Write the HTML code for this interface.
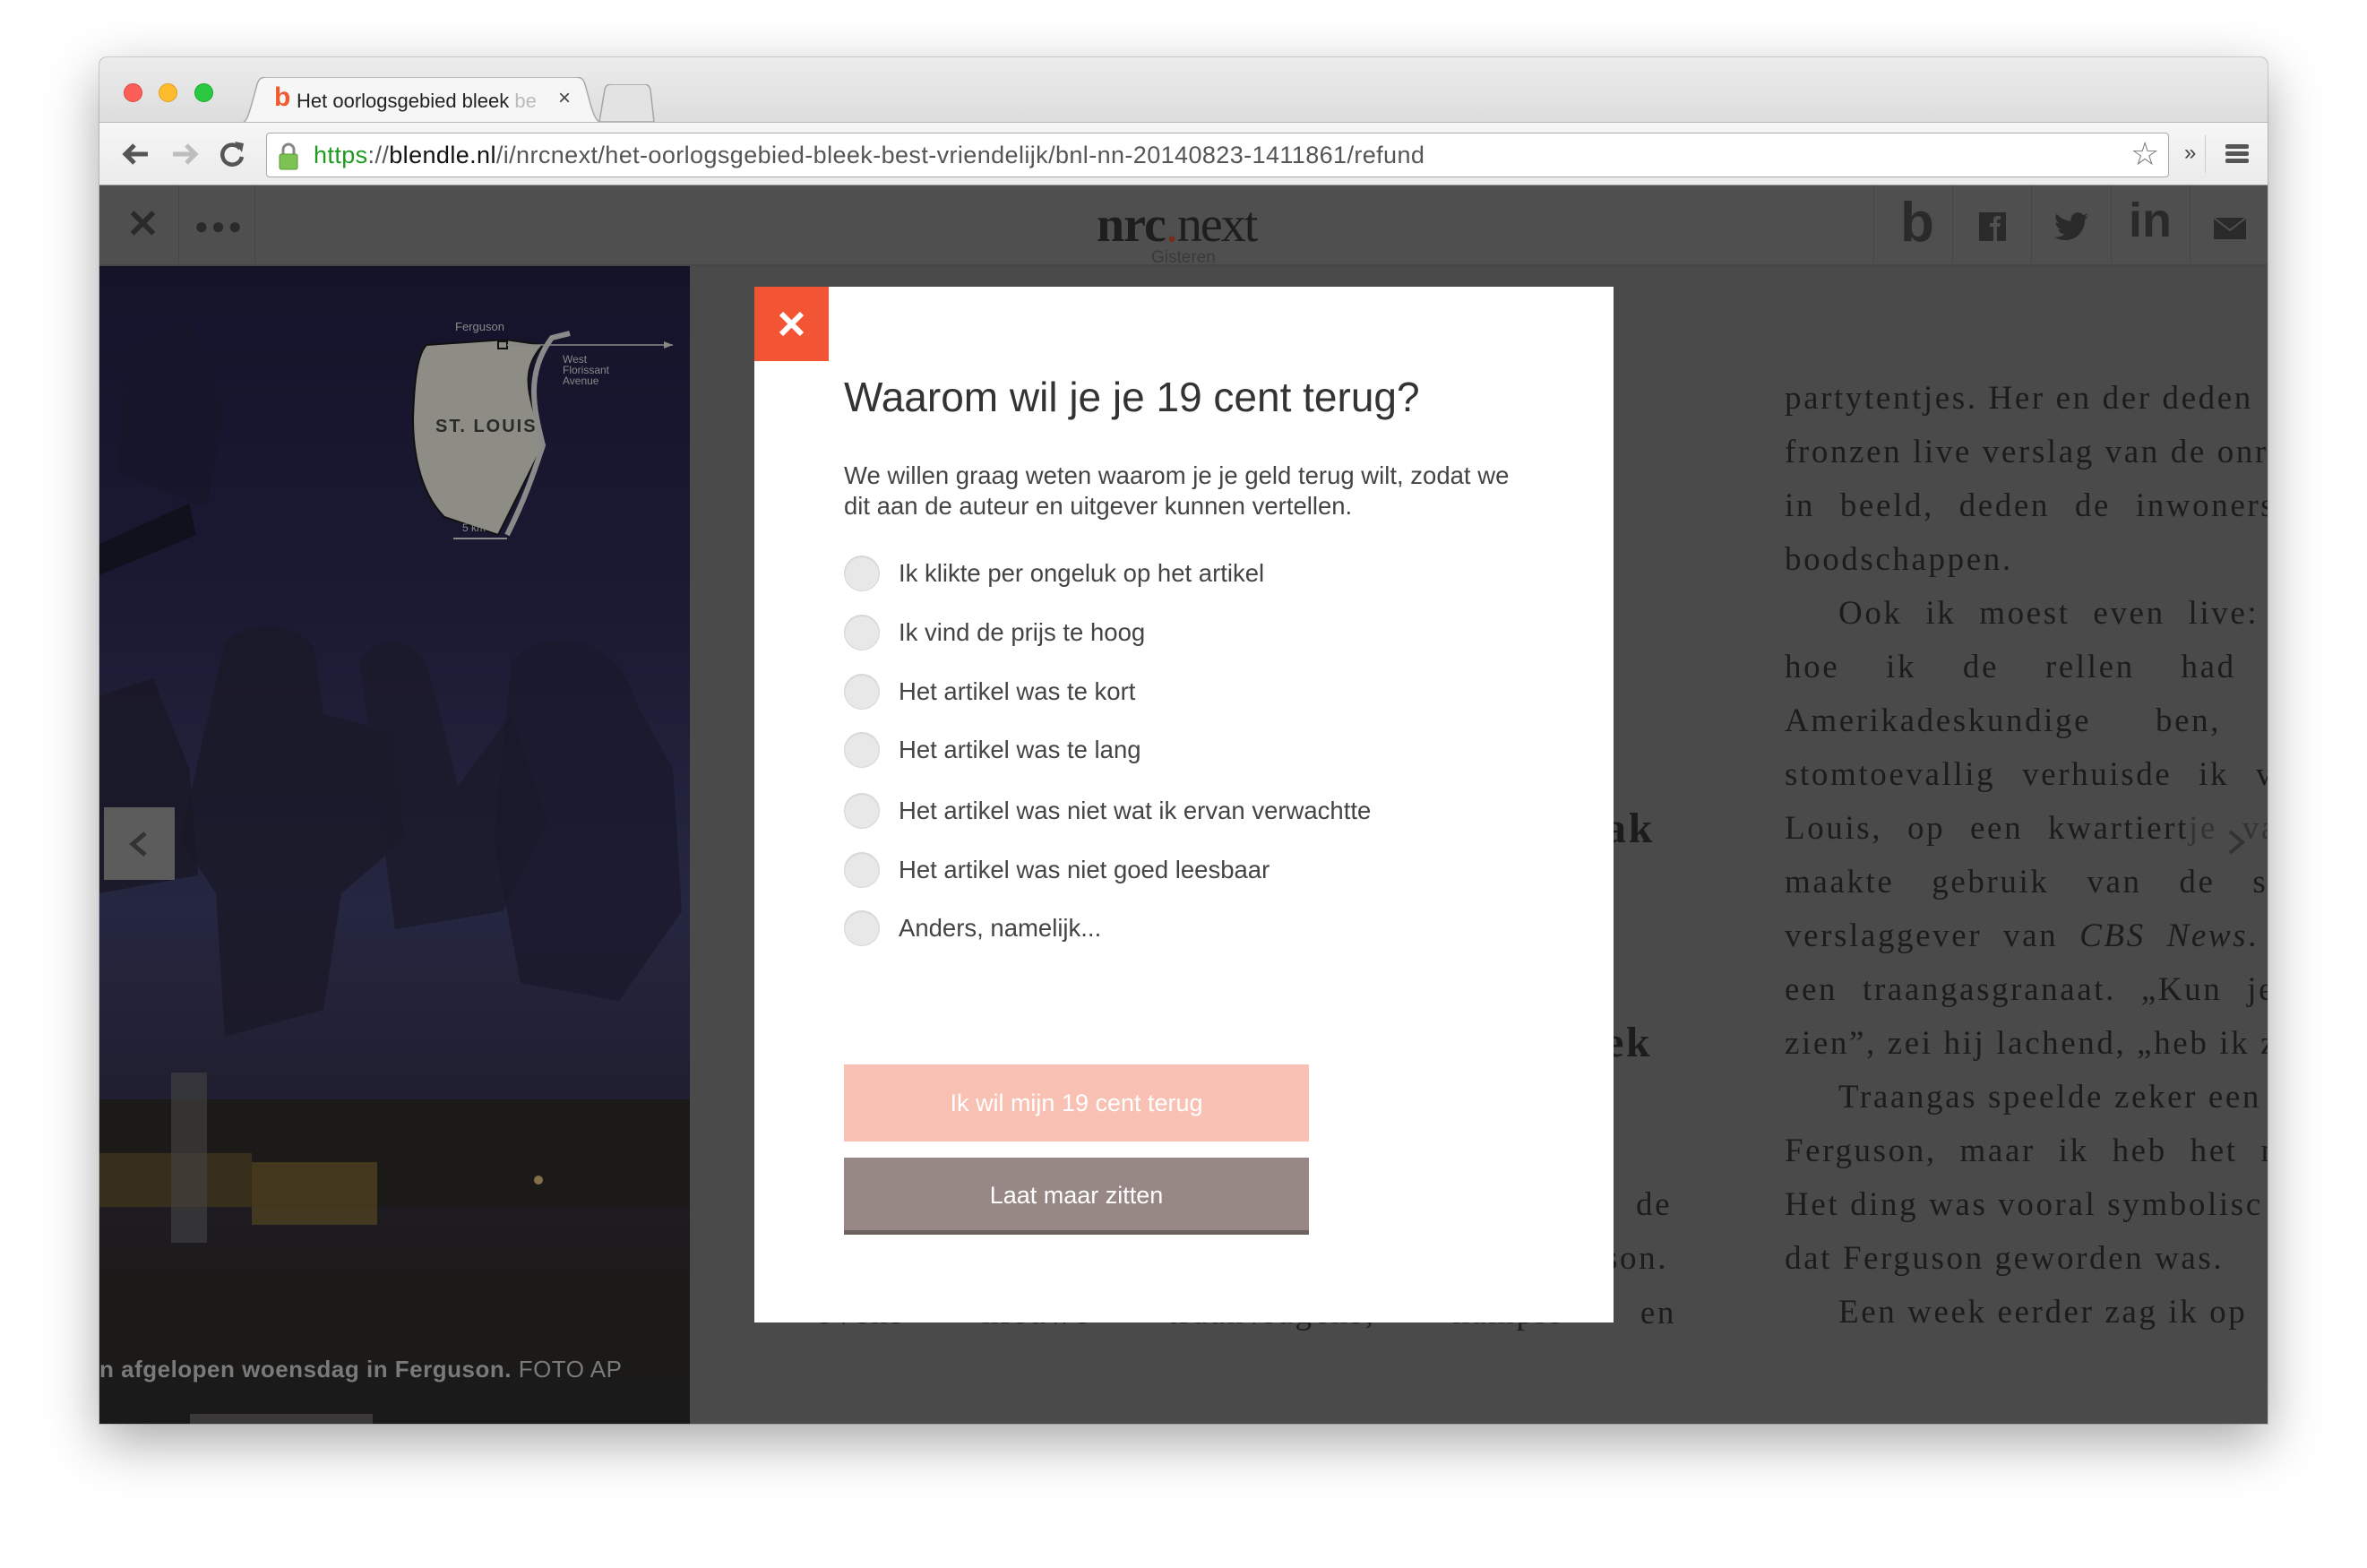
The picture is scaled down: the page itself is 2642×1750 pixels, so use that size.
<!DOCTYPE html>
<html><head><meta charset="utf-8"><style>
*{margin:0;padding:0;box-sizing:border-box}
body{width:2642px;height:1750px;background:#fff;position:relative;overflow:hidden;font-family:"Liberation Sans",Arial,sans-serif}
.abs{position:absolute}
#win{left:111px;top:64px;width:2420px;height:1525px;border-radius:8px 8px 0 0;box-shadow:0 20px 60px rgba(0,0,0,.35),0 0 0 1px rgba(0,0,0,.15);overflow:hidden;background:#4a4a4a}
#tabbar{left:0;top:0;width:2420px;height:72px;background:linear-gradient(#ececec,#dddddd)}
.tl{width:21px;height:21px;border-radius:50%;top:29px}
#toolbar{left:0;top:72px;width:2420px;height:71px;background:linear-gradient(#f6f6f6,#ebebeb);border-top:1px solid #b8b8b8;border-bottom:1px solid #9a9a9a}
#omni{left:186px;top:11px;width:2124px;height:50px;background:#fff;border:1px solid #a9a9a9;border-radius:4px}
#hdr{left:0;top:143px;width:2420px;height:90px;background:#4f4f4f;border-bottom:2px solid #464646}
.sep{top:0;width:1px;height:88px;background:#464646}
.art{font-family:"Liberation Serif",serif;font-size:37px;color:#1c1c1c;letter-spacing:2.6px;white-space:nowrap;line-height:60px}
.opt{left:59px;height:40px;font-size:27.5px;color:#444;line-height:40px}
.opt i{position:absolute;left:0;top:0;width:40px;height:40px;border-radius:50%;background:#e8e8e8;border:1px solid #d6d6d6;box-shadow:inset 0 1px 1px rgba(0,0,0,.08)}
.opt span{position:absolute;left:61px;top:0;white-space:nowrap}
.ind{padding-left:60px}
</style></head><body>
<div id="win" class="abs">
  <div id="tabbar" class="abs">
    <div class="abs tl" style="left:27px;background:#fc5f57;border:1px solid #df4744"></div>
    <div class="abs tl" style="left:66px;background:#fdbc2e;border:1px solid #dea123"></div>
    <div class="abs tl" style="left:106px;background:#29c840;border:1px solid #1aab29"></div>
    <svg class="abs" style="left:150px;top:22px" width="420" height="52"><path d="M0 52 C14 52 14 50 20 30 L26 8 C28 2 30 0 38 0 L380 0 C388 0 390 2 392 8 L398 30 C404 50 406 52 420 52 Z" fill="#f6f6f6" stroke="#a9a9a9" stroke-width="1.5"/></svg>
    <div class="abs" style="left:195px;top:28px;font-size:30px;font-weight:bold;color:#f05a2e">b</div>
    <div class="abs" style="left:220px;top:36px;font-size:22px;color:#222;white-space:nowrap;width:272px;overflow:hidden">Het oorlogsgebied bleek <span style="color:#bbb">be</span></div>
    <div class="abs" style="left:512px;top:32px;font-size:24px;color:#444">×</div>
    <svg class="abs" style="left:556px;top:30px" width="64" height="42"><path d="M2 42 L8 6 C9 2 11 0 16 0 L52 0 C56 0 58 2 59 6 L63 42 Z" fill="#e3e3e3" stroke="#a5a5a5" stroke-width="1.5"/></svg>
  </div>
  <div id="toolbar" class="abs">
    <svg class="abs" style="left:24px;top:21px" width="34" height="28"><path d="M30 14 H6 M15 4 L5 14 L15 24" stroke="#555" stroke-width="5" fill="none"/></svg>
    <svg class="abs" style="left:78px;top:21px" width="34" height="28"><path d="M4 14 H28 M19 4 L29 14 L19 24" stroke="#bdbdbd" stroke-width="5" fill="none"/></svg>
    <svg class="abs" style="left:132px;top:19px" width="32" height="32"><path d="M25 10 A11 11 0 1 0 27 19" stroke="#555" stroke-width="4.5" fill="none"/><path d="M19 2 L29 4 L27 14 Z" fill="#555"/></svg>
    <div id="omni" class="abs">
      <svg class="abs" style="left:12px;top:9px" width="24" height="32"><path d="M6 14 V9 A6 6 0 0 1 18 9 V14" stroke="#888" stroke-width="3" fill="none"/><rect x="2" y="14" width="20" height="17" rx="2" fill="#7cc354" stroke="#5a9a38"/></svg>
      <div class="abs" style="left:52px;top:9px;font-size:27px;color:#555;white-space:nowrap;letter-spacing:.4px"><span style="color:#1f9a1f">https</span>://<span style="color:#111">blendle.nl</span>/i/nrcnext/het-oorlogsgebied-bleek-best-vriendelijk/bnl-nn-20140823-1411861/refund</div>
      <div class="abs" style="left:2080px;top:2px;font-size:36px;color:#777">☆</div>
    </div>
    <div class="abs" style="left:2327px;top:20px;font-size:24px;color:#444">»</div>
    <div class="abs" style="left:2350px;top:14px;width:1px;height:42px;background:#ccc"></div>
    <div class="abs" style="left:2373px;top:24px;width:26px;height:5px;background:#555;border-radius:2px"></div>
    <div class="abs" style="left:2373px;top:32px;width:26px;height:5px;background:#555;border-radius:2px"></div>
    <div class="abs" style="left:2373px;top:40px;width:26px;height:5px;background:#555;border-radius:2px"></div>
  </div>
  <div id="hdr" class="abs">
    <div class="abs" style="left:30px;top:18px;font-size:44px;font-weight:bold;color:#2a2a2a">✕</div>
    <div class="abs sep" style="left:88px"></div>
    <div class="abs" style="left:106px;top:30px;font-size:26px;color:#2a2a2a;letter-spacing:3px">●●●</div>
    <div class="abs sep" style="left:173px"></div>
    <div class="abs" style="left:1113px;top:12px;font-family:'Liberation Serif',serif;font-size:56px;color:#1e1e1e;letter-spacing:-1px"><b>nrc</b><span style="color:#7a2a1a">.</span><span style="font-weight:normal;letter-spacing:-2px">next</span></div>
    <div class="abs" style="left:1174px;top:70px;font-size:19px;color:#3a3a3a">Gisteren</div>
    <div class="abs sep" style="left:1980px"></div>
    <div class="abs" style="left:2010px;top:6px;font-size:62px;font-weight:bold;color:#2a2a2a">b</div>
    <div class="abs sep" style="left:2068px"></div>
    <svg class="abs" style="left:2098px;top:30px" width="30" height="32"><rect width="30" height="32" fill="#2a2a2a"/><path d="M16 32 V16 H12 V12 H16 V8 C16 5 18 4 21 4 H24 V8 H21 C20 8 20 9 20 10 V12 H24 L23 16 H20 V32 Z" fill="#4f4f4f"/></svg>
    <div class="abs sep" style="left:2156px"></div>
    <svg class="abs" style="left:2182px;top:30px" width="38" height="32" viewBox="0 0 24 20"><path d="M24 2.4c-.9.4-1.8.7-2.8.8 1-.6 1.800-1.600 2.2-2.7-1 .6-2 1-3.1 1.2C19.3.7 18 0 16.6 0c-2.7 0-4.9 2.2-4.9 4.9 0 .4 0 .8.1 1.1C7.7 5.8 4.1 3.9 1.7.9c-.4.7-.7 1.6-.7 2.5 0 1.7.9 3.2 2.2 4.1-.8 0-1.6-.2-2.2-.6v.1c0 2.4 1.7 4.4 3.9 4.8-.4.1-.8.2-1.3.2-.3 0-.6 0-.9-.1.6 2 2.4 3.4 4.6 3.4-1.7 1.3-3.8 2.1-6.1 2.1-.4 0-.8 0-1.2-.1 2.2 1.4 4.8 2.2 7.5 2.2 9.1 0 14-7.5 14-14v-.6c1-.7 1.8-1.6 2.5-2.5z" fill="#2a2a2a"/></svg>
    <div class="abs sep" style="left:2245px"></div>
    <div class="abs" style="left:2265px;top:8px;font-size:54px;font-weight:bold;color:#2a2a2a">in</div>
    <div class="abs sep" style="left:2333px"></div>
    <svg class="abs" style="left:2360px;top:36px" width="36" height="24"><rect width="36" height="24" fill="#2a2a2a"/><path d="M0 0 L18 14 L36 0" stroke="#4f4f4f" stroke-width="2" fill="none"/></svg>
  </div>
  <!-- left photo panel -->
  <div class="abs" style="left:0;top:233px;width:659px;height:1292px;overflow:hidden;background:linear-gradient(180deg,#14132a 0%,#1b1a33 30%,#252640 55%,#201e30 72%,#1c1a18 88%,#1a1a1a 100%)">
    <svg class="abs" style="left:0;top:0" width="659" height="1292">
      <path d="M30 90 L100 60 L140 160 L120 270 L20 230 Z" fill="#17162a" opacity=".8"/>
      <path d="M0 310 L100 265 L108 300 L0 345 Z" fill="#11101d"/>
      <path d="M140 420 C170 390 230 400 240 430 L250 500 L330 520 L340 640 L270 700 L250 830 L140 860 L130 700 L90 640 Z" fill="#1a1928" opacity=".8"/>
      <path d="M0 480 L60 460 L100 560 L110 680 L0 700 Z" fill="#191826" opacity=".8"/>
      <path d="M290 440 C320 400 360 420 370 460 L400 580 L460 500 L500 620 L450 720 L330 740 Z" fill="#1b1a2a" opacity=".8"/>
      <path d="M460 440 C500 400 580 410 600 490 L640 560 L650 720 L580 820 L470 800 L440 640 Z" fill="#1a192c" opacity=".8"/>
      <rect x="0" y="930" width="659" height="120" fill="#1c1a18"/>
      <rect x="0" y="990" width="170" height="60" fill="#4a3d20" opacity=".6"/>
      <rect x="170" y="1000" width="140" height="70" fill="#5e4d22" opacity=".6"/>
      <rect x="80" y="900" width="40" height="190" fill="#444" opacity=".6"/>
      <circle cx="490" cy="1020" r="5" fill="#c9a86a" opacity=".6"/>
    </svg>
    <svg class="abs" style="left:345px;top:60px" width="300" height="270" viewBox="0 0 300 270">
      <text x="52" y="12" font-size="13" fill="#888" font-family="Liberation Sans">Ferguson</text>
      <path d="M20 28 L108 22 L150 28 C120 60 138 90 150 140 C130 180 110 220 100 240 L40 220 C10 190 5 140 5 110 C6 80 8 40 20 28 Z" fill="#8d8d86" stroke="#111" stroke-width="2"/>
      <path d="M110 240 C130 200 140 170 150 140 C140 100 130 60 160 20 L180 15" stroke="#8a8a8a" stroke-width="6" fill="none"/>
      <rect x="100" y="24" width="10" height="8" fill="none" stroke="#111" stroke-width="2"/>
      <path d="M110 28 H295" stroke="#888" stroke-width="1.5"/><path d="M285 24 L295 28 L285 32" fill="#888"/>
      <text x="30" y="125" font-size="20" fill="#2a2a2a" font-weight="bold" letter-spacing="2" font-family="Liberation Sans">ST. LOUIS</text>
      <text x="172" y="48" font-size="12" fill="#888" font-family="Liberation Sans">West</text>
      <text x="172" y="60" font-size="12" fill="#888" font-family="Liberation Sans">Florissant</text>
      <text x="172" y="72" font-size="12" fill="#888" font-family="Liberation Sans">Avenue</text>
      <text x="60" y="236" font-size="12" fill="#888" font-family="Liberation Sans">5 km</text>
      <path d="M50 244 H110" stroke="#888" stroke-width="2"/>
    </svg>
    <div class="abs" style="left:5px;top:604px;width:79px;height:81px;background:#5c5c5c"><svg class="abs" style="left:26px;top:26px" width="26" height="30"><path d="M20 3 L6 15 L20 27" stroke="#333" stroke-width="5" fill="none"/></svg></div>
    <div class="abs" style="left:0;top:1216px;font-size:26px;color:#7a7a7a;font-weight:bold;white-space:nowrap;letter-spacing:.5px">n afgelopen woensdag in Ferguson. <span style="font-weight:normal">FOTO AP</span></div>
    <div class="abs" style="left:101px;top:1281px;width:204px;height:11px;background:#3a3838"></div>
  </div>
  <!-- middle column fragments -->
  <div class="abs art" style="left:1680px;top:831px;font-size:48px;font-weight:bold;line-height:60px">ak</div>
  <div class="abs art" style="left:1680px;top:1070px;font-size:48px;font-weight:bold;line-height:60px">ek</div>
  <div class="abs art" style="left:1715px;top:1251px">de</div>
  <div class="abs art" style="left:1680px;top:1311px">son.</div>
  <div class="abs art" style="left:800px;top:1372px;width:960px;text-align:justify;text-align-last:justify">ovens &nbsp; nieuwe &nbsp; traanvragens, &nbsp; kampie &nbsp; en</div>
  <svg class="abs" style="left:2372px;top:860px" width="26" height="32"><path d="M6 4 L20 16 L6 28" stroke="#333" stroke-width="4" fill="none"/></svg>
  <!-- right article -->
  <div class="abs" style="left:1881px;top:351px;width:539px;height:1174px;overflow:hidden">
    <div class="abs art" style="left:0;top:0;width:640px">
      <div>partytentjes. Her en der deden</div>
      <div>fronzen live verslag van de onr</div>
      <div style="word-spacing:16px">in beeld, deden de inwoners</div>
      <div>boodschappen.</div>
      <div class="ind" style="word-spacing:14px">Ook ik moest even live: I</div>
      <div style="word-spacing:40px">hoe ik de rellen had e</div>
      <div style="word-spacing:60px">Amerikadeskundige ben, i</div>
      <div style="word-spacing:18px">stomtoevallig verhuisde ik v</div>
      <div style="word-spacing:16px">Louis, op een kwartiert<span style="color:#333">je va</span></div>
      <div style="word-spacing:30px">maakte gebruik van de sa</div>
      <div style="word-spacing:12px">verslaggever van <i>CBS News</i>. H</div>
      <div style="word-spacing:16px">een traangasgranaat. „Kun je</div>
      <div>zien”, zei hij lachend, „heb ik z</div>
      <div class="ind">Traangas speelde zeker een</div>
      <div style="word-spacing:14px">Ferguson, maar ik heb het n</div>
      <div>Het ding was vooral symbolisc</div>
      <div>dat Ferguson geworden was.</div>
      <div class="ind">Een week eerder zag ik op</div>
    </div>
  </div>
  <!-- modal -->
  <div class="abs" style="left:731px;top:256px;width:959px;height:1156px;background:#fff">
    <div class="abs" style="left:0;top:0;width:83px;height:83px;background:#f35434"><svg class="abs" style="left:26px;top:26px" width="31" height="31"><path d="M4 4 L27 27 M27 4 L4 27" stroke="#fff" stroke-width="6"/></svg></div>
    <div class="abs" style="left:100px;top:96px;font-size:46px;color:#333;white-space:nowrap">Waarom wil je je 19 cent terug?</div>
    <div class="abs" style="left:100px;top:194px;font-size:27.5px;color:#444;line-height:34px;width:820px;white-space:nowrap">We willen graag weten waarom je je geld terug wilt, zodat we<br>dit aan de auteur en uitgever kunnen vertellen.</div>
    <div class="abs opt" style="left:100px;top:300px"><i></i><span>Ik klikte per ongeluk op het artikel</span></div>
    <div class="abs opt" style="left:100px;top:366px"><i></i><span>Ik vind de prijs te hoog</span></div>
    <div class="abs opt" style="left:100px;top:432px"><i></i><span>Het artikel was te kort</span></div>
    <div class="abs opt" style="left:100px;top:497px"><i></i><span>Het artikel was te lang</span></div>
    <div class="abs opt" style="left:100px;top:565px"><i></i><span>Het artikel was niet wat ik ervan verwachtte</span></div>
    <div class="abs opt" style="left:100px;top:631px"><i></i><span>Het artikel was niet goed leesbaar</span></div>
    <div class="abs opt" style="left:100px;top:696px"><i></i><span>Anders, namelijk...</span></div>
    <div class="abs" style="left:100px;top:868px;width:519px;height:86px;background:#f8c1b3;color:#fff;font-size:27px;text-align:center;line-height:86px">Ik wil mijn 19 cent terug</div>
    <div class="abs" style="left:100px;top:972px;width:519px;height:86px;background:#978885;border-bottom:5px solid #6c615e;color:#fff;font-size:27px;text-align:center;line-height:84px">Laat maar zitten</div>
  </div>
</div>
</body></html>
